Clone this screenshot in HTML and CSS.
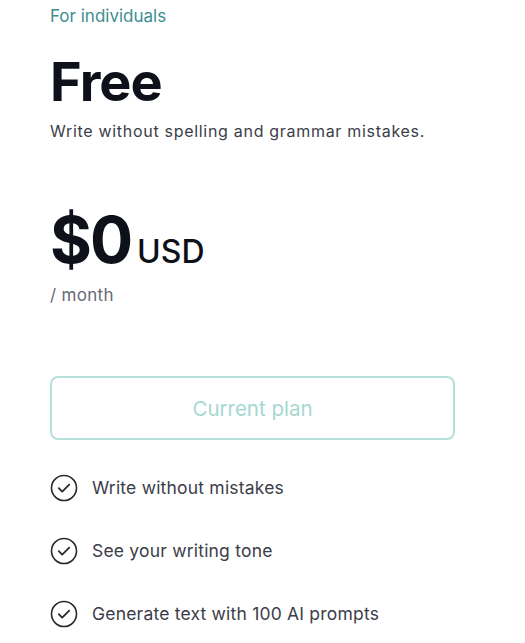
FILE: index.html
```html
<!DOCTYPE html>
<html lang="en">
<head>
  <meta charset="UTF-8">
  <meta name="viewport" content="width=device-width, initial-scale=1.0">
  <title>Free plan</title>
  <link rel="stylesheet" href="styles.css">
</head>
<body>
  <main class="plan">
    <p class="audience">For individuals</p>
    <h1 class="plan-name">Free</h1>
    <p class="tagline">Write without spelling and grammar mistakes.</p>

    <div class="price">
      <span class="amount">$0</span>
      <span class="currency">USD</span>
    </div>
    <p class="period">/ month</p>

    <button class="current" type="button" disabled>Current plan</button>

    <ul class="features">
      <li>
        <svg class="check" viewBox="0 0 28 28" width="28" height="28" aria-hidden="true">
          <circle cx="14" cy="14" r="12.5" fill="none" stroke="#2a2a2e" stroke-width="1.6"/>
          <path d="M8.8 14.2l3.4 3.4 7-7" fill="none" stroke="#2a2a2e" stroke-width="1.8" stroke-linecap="round" stroke-linejoin="round"/>
        </svg>
        Write without mistakes
      </li>
      <li>
        <svg class="check" viewBox="0 0 28 28" width="28" height="28" aria-hidden="true">
          <circle cx="14" cy="14" r="12.5" fill="none" stroke="#2a2a2e" stroke-width="1.6"/>
          <path d="M8.8 14.2l3.4 3.4 7-7" fill="none" stroke="#2a2a2e" stroke-width="1.8" stroke-linecap="round" stroke-linejoin="round"/>
        </svg>
        See your writing tone
      </li>
      <li>
        <svg class="check" viewBox="0 0 28 28" width="28" height="28" aria-hidden="true">
          <circle cx="14" cy="14" r="12.5" fill="none" stroke="#2a2a2e" stroke-width="1.6"/>
          <path d="M8.8 14.2l3.4 3.4 7-7" fill="none" stroke="#2a2a2e" stroke-width="1.8" stroke-linecap="round" stroke-linejoin="round"/>
        </svg>
        Generate text with 100 AI prompts
      </li>
    </ul>
  </main>
</body>
</html>
```

FILE: styles.css
```css
body {
  margin: 0;
  background: #fff;
  color: #0e101a;
  font-family: Inter, 'Noto Sans', sans-serif;
}

.plan {
  padding: 4px 70px 0 50px;
}

.audience {
  margin: 0;
  font-size: 17px;
  line-height: 24px;
  color: #3d8e91;
}

.plan-name {
  margin: 24px 0 0;
  font-size: 54px;
  line-height: 60px;
  font-weight: 700;
  letter-spacing: -1px;
}

.tagline {
  margin: 7px 0 0;
  font-size: 16px;
  line-height: 24px;
  letter-spacing: 0.7px;
  color: #3b3d49;
}

.price {
  display: flex;
  align-items: baseline;
  gap: 6px;
  margin-top: 61px;
}

.amount {
  font-size: 64px;
  line-height: 72px;
  font-weight: 700;
  letter-spacing: -2px;
}

.currency {
  font-size: 32px;
  font-weight: 500;
}

.period {
  margin: 7px 0 0;
  font-size: 17px;
  line-height: 24px;
  letter-spacing: 0.3px;
  color: #676a72;
}

.current {
  display: block;
  width: 100%;
  height: 64px;
  margin-top: 69px;
  border: 2px solid #b8e0da;
  border-radius: 8px;
  background: #fff;
  color: #a6d8d1;
  font-family: inherit;
  font-size: 20.5px;
}

.features {
  list-style: none;
  margin: 16px 0 0;
  padding: 0;
}

.features li {
  display: flex;
  align-items: center;
  gap: 14px;
  height: 63px;
  font-size: 17.5px;
  letter-spacing: 0.2px;
  color: #3b3d49;
}

.check {
  flex: none;
}
```
